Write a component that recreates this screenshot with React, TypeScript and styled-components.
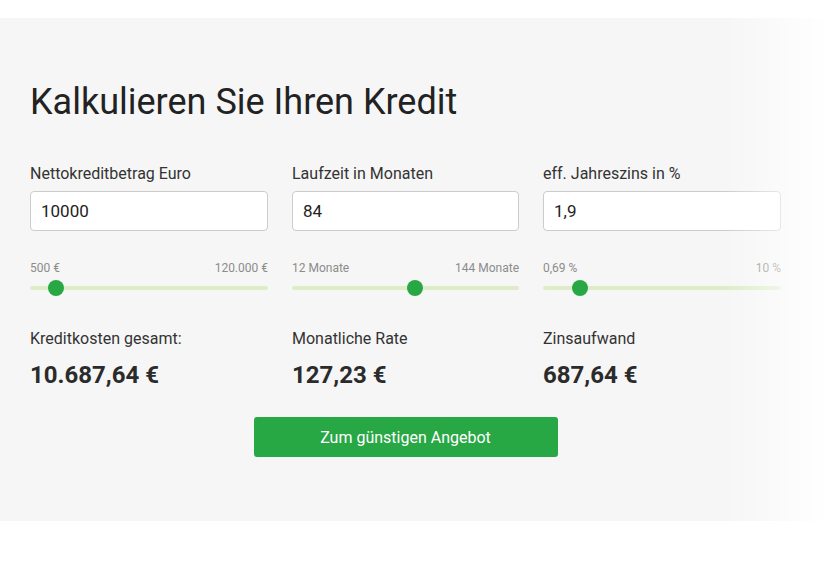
import React, { useState } from 'react';
import styled, { createGlobalStyle } from 'styled-components';

const GlobalStyle = createGlobalStyle`
  html, body {
    margin: 0;
    padding: 0;
    background: #fff;
    font-family: Roboto, "Liberation Sans", Arial, sans-serif;
  }
`;

const Page = styled.div`
  padding-top: 18px;
`;

const Panel = styled.section`
  position: relative;
  background: #f6f6f6;
  padding: 63px 30px 64px;
  overflow: hidden;
`;

const Fade = styled.div`
  position: absolute;
  top: 0;
  right: 0;
  bottom: 0;
  width: 110px;
  background: linear-gradient(to right, rgba(255, 255, 255, 0), #fff 95%);
  pointer-events: none;
`;

const Title = styled.h1`
  margin: 0 0 38px;
  font-size: 36px;
  line-height: 1.2;
  font-weight: 400;
  color: #222;
`;

const Grid = styled.div`
  display: grid;
  grid-template-columns: 238px 227px 238px;
  column-gap: 24px;
  width: 751px;
`;

const Field = styled.div`
  display: flex;
  flex-direction: column;
`;

const Label = styled.label`
  font-size: 16px;
  line-height: 24px;
  color: #333;
  margin-bottom: 5px;
`;

const TextInput = styled.input`
  box-sizing: border-box;
  height: 40px;
  width: 100%;
  border: 1px solid #ccc;
  border-radius: 4px;
  background: #fff;
  padding: 0 10px;
  font-family: inherit;
  font-size: 17px;
  color: #222;
  outline: none;
`;

const RangeLabels = styled.div`
  display: flex;
  justify-content: space-between;
  margin-top: 28px;
  font-size: 12px;
  line-height: 18px;
  color: #8c8c8c;
`;

const Slider = styled.input`
  -webkit-appearance: none;
  appearance: none;
  margin: 3px 0 0;
  width: 100%;
  height: 16px;
  background: transparent;
  cursor: pointer;

  &::-webkit-slider-runnable-track {
    height: 4px;
    background: #dcedc8;
    border-radius: 2px;
  }

  &::-webkit-slider-thumb {
    -webkit-appearance: none;
    width: 16px;
    height: 16px;
    margin-top: -6px;
    border-radius: 50%;
    background: #28a745;
    border: none;
  }

  &::-moz-range-track {
    height: 4px;
    background: #dcedc8;
  }

  &::-moz-range-thumb {
    width: 16px;
    height: 16px;
    border: none;
    border-radius: 50%;
    background: #28a745;
  }
`;

const ResultGrid = styled(Grid)`
  margin-top: 31px;
`;

const ResultLabel = styled.div`
  font-size: 16px;
  line-height: 24px;
  color: #333;
`;

const ResultValue = styled.div`
  margin-top: 9px;
  font-size: 24px;
  line-height: 30px;
  font-weight: 700;
  color: #2b2b2b;
`;

const Actions = styled.div`
  width: 751px;
  display: flex;
  justify-content: center;
  margin-top: 27px;
`;

const Button = styled.button`
  width: 304px;
  height: 40px;
  border: none;
  border-radius: 3px;
  background: #28a745;
  color: #fff;
  font-family: inherit;
  font-size: 16px;
  cursor: pointer;
`;

const euro = (n: number) =>
  n.toLocaleString('de-DE', { minimumFractionDigits: 2, maximumFractionDigits: 2 }) + ' €';

const parse = (s: string) => parseFloat(s.replace(/\./g, '').replace(',', '.')) || 0;

const App: React.FC = () => {
  const [amount, setAmount] = useState('10000');
  const [months, setMonths] = useState('84');
  const [rate, setRate] = useState('1,9');

  const a = parse(amount);
  const m = parse(months);
  const r = parse(rate) / 100 / 12;
  const monthly = m > 0 ? (r > 0 ? (a * r) / (1 - Math.pow(1 + r, -m)) : a / m) : 0;
  const total = monthly * m;
  const interest = total - a;

  return (
    <Page>
      <GlobalStyle />
      <Panel>
        <Title>Kalkulieren Sie Ihren Kredit</Title>
        <Grid>
          <Field>
            <Label>Nettokreditbetrag Euro</Label>
            <TextInput value={amount} onChange={e => setAmount(e.target.value)} />
            <RangeLabels>
              <span>500 €</span>
              <span>120.000 €</span>
            </RangeLabels>
            <Slider
              type="range"
              min={500}
              max={120000}
              step={100}
              value={a}
              onChange={e => setAmount(e.target.value)}
            />
          </Field>
          <Field>
            <Label>Laufzeit in Monaten</Label>
            <TextInput value={months} onChange={e => setMonths(e.target.value)} />
            <RangeLabels>
              <span>12 Monate</span>
              <span>144 Monate</span>
            </RangeLabels>
            <Slider
              type="range"
              min={12}
              max={144}
              step={1}
              value={m}
              onChange={e => setMonths(e.target.value)}
            />
          </Field>
          <Field>
            <Label>eff. Jahreszins in %</Label>
            <TextInput value={rate} onChange={e => setRate(e.target.value)} />
            <RangeLabels>
              <span>0,69 %</span>
              <span>10 %</span>
            </RangeLabels>
            <Slider
              type="range"
              min={0.69}
              max={10}
              step={0.01}
              value={parse(rate)}
              onChange={e => setRate(e.target.value.replace('.', ','))}
            />
          </Field>
        </Grid>
        <ResultGrid>
          <div>
            <ResultLabel>Kreditkosten gesamt:</ResultLabel>
            <ResultValue>{euro(total)}</ResultValue>
          </div>
          <div>
            <ResultLabel>Monatliche Rate</ResultLabel>
            <ResultValue>{euro(monthly)}</ResultValue>
          </div>
          <div>
            <ResultLabel>Zinsaufwand</ResultLabel>
            <ResultValue>{euro(interest)}</ResultValue>
          </div>
        </ResultGrid>
        <Actions>
          <Button>Zum günstigen Angebot</Button>
        </Actions>
        <Fade />
      </Panel>
    </Page>
  );
};

export default App;
